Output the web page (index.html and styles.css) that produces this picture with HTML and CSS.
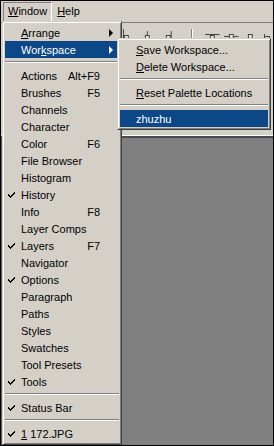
FILE: index.html
```html
<!DOCTYPE html>
<html lang="en">
<head>
    <meta charset="UTF-8">
    <meta name="viewport" content="width=device-width, initial-scale=1.0">
    <title>Window menu</title>
    <link rel="stylesheet" href="styles.css">
</head>
<body>
    <div class="app">
        <div class="menubar">
            <div class="bar-item pressed"><u>W</u>indow</div>
            <div class="bar-item"><u>H</u>elp</div>
        </div>

        <div class="optionsbar">
            <svg class="tool" width="16" height="12" viewBox="0 0 16 12">
                <line x1="1.5" y1="0" x2="1.5" y2="11" stroke="#404040"/>
                <rect x="2.5" y="6.5" width="4" height="4" fill="#e8e6e2" stroke="#404040"/>
            </svg>
            <svg class="tool" width="16" height="12" viewBox="0 0 16 12">
                <line x1="5.5" y1="2" x2="5.5" y2="7" stroke="#404040"/>
                <rect x="3.5" y="6.5" width="4" height="4" fill="#e8e6e2" stroke="#404040"/>
            </svg>
            <svg class="tool" width="16" height="12" viewBox="0 0 16 12">
                <rect x="5.5" y="6.5" width="4" height="4" fill="#e8e6e2" stroke="#404040"/>
                <line x1="10.5" y1="2" x2="10.5" y2="11" stroke="#404040"/>
            </svg>
            <span class="tool-sep"></span>
            <svg class="tool" width="16" height="12" viewBox="0 0 16 12">
                <line x1="0" y1="5.5" x2="15" y2="5.5" stroke="#404040"/>
                <rect x="5.5" y="6.5" width="4" height="4" fill="#e8e6e2" stroke="#404040"/>
            </svg>
            <svg class="tool" width="16" height="12" viewBox="0 0 16 12">
                <line x1="0" y1="7.5" x2="15" y2="7.5" stroke="#404040"/>
                <rect x="5.5" y="5.5" width="4" height="4" fill="#e8e6e2" stroke="#404040"/>
            </svg>
            <svg class="tool" width="16" height="12" viewBox="0 0 16 12">
                <rect x="4.5" y="5.5" width="4" height="4" fill="#e8e6e2" stroke="#404040"/>
                <line x1="0" y1="10.5" x2="13" y2="10.5" stroke="#404040"/>
            </svg>
            <svg class="tool" width="10" height="12" viewBox="0 0 10 12">
                <line x1="1.5" y1="5" x2="1.5" y2="11" stroke="#404040"/>
                <line x1="6.5" y1="7" x2="6.5" y2="11" stroke="#404040"/>
                <line x1="1.5" y1="7.5" x2="6.5" y2="7.5" stroke="#404040"/>
            </svg>
        </div>

        <div class="canvas"></div>

        <div class="menu main-menu">
            <div class="row"><span class="check"></span><span class="label"><u>A</u>rrange</span><span class="key"></span><span class="sub"><i class="arrow"></i></span></div>
            <div class="row active"><span class="check"></span><span class="label">Wor<u>k</u>space</span><span class="key"></span><span class="sub"><i class="arrow"></i></span></div>
            <div class="sep"></div>
            <div class="row"><span class="check"></span><span class="label">Actions</span><span class="key">Alt+F9</span><span class="sub"></span></div>
            <div class="row"><span class="check"></span><span class="label">Brushes</span><span class="key">F5</span><span class="sub"></span></div>
            <div class="row"><span class="check"></span><span class="label">Channels</span><span class="key"></span><span class="sub"></span></div>
            <div class="row"><span class="check"></span><span class="label">Character</span><span class="key"></span><span class="sub"></span></div>
            <div class="row"><span class="check"></span><span class="label">Color</span><span class="key">F6</span><span class="sub"></span></div>
            <div class="row"><span class="check"></span><span class="label">File Browser</span><span class="key"></span><span class="sub"></span></div>
            <div class="row"><span class="check"></span><span class="label">Histogram</span><span class="key"></span><span class="sub"></span></div>
            <div class="row checked"><span class="check"></span><span class="label">History</span><span class="key"></span><span class="sub"></span></div>
            <div class="row"><span class="check"></span><span class="label">Info</span><span class="key">F8</span><span class="sub"></span></div>
            <div class="row"><span class="check"></span><span class="label">Layer Comps</span><span class="key"></span><span class="sub"></span></div>
            <div class="row checked"><span class="check"></span><span class="label">Layers</span><span class="key">F7</span><span class="sub"></span></div>
            <div class="row"><span class="check"></span><span class="label">Navigator</span><span class="key"></span><span class="sub"></span></div>
            <div class="row checked"><span class="check"></span><span class="label">Options</span><span class="key"></span><span class="sub"></span></div>
            <div class="row"><span class="check"></span><span class="label">Paragraph</span><span class="key"></span><span class="sub"></span></div>
            <div class="row"><span class="check"></span><span class="label">Paths</span><span class="key"></span><span class="sub"></span></div>
            <div class="row"><span class="check"></span><span class="label">Styles</span><span class="key"></span><span class="sub"></span></div>
            <div class="row"><span class="check"></span><span class="label">Swatches</span><span class="key"></span><span class="sub"></span></div>
            <div class="row"><span class="check"></span><span class="label">Tool Presets</span><span class="key"></span><span class="sub"></span></div>
            <div class="row checked"><span class="check"></span><span class="label">Tools</span><span class="key"></span><span class="sub"></span></div>
            <div class="sep"></div>
            <div class="row checked"><span class="check"></span><span class="label">Status Bar</span><span class="key"></span><span class="sub"></span></div>
            <div class="sep"></div>
            <div class="row checked"><span class="check"></span><span class="label"><u>1</u> 172.JPG</span><span class="key"></span><span class="sub"></span></div>
        </div>

        <div class="menu sub-menu">
            <div class="row"><span class="check"></span><span class="label"><u>S</u>ave Workspace...</span></div>
            <div class="row"><span class="check"></span><span class="label"><u>D</u>elete Workspace...</span></div>
            <div class="sep"></div>
            <div class="row"><span class="check"></span><span class="label"><u>R</u>eset Palette Locations</span></div>
            <div class="sep"></div>
            <div class="row active"><span class="check"></span><span class="label">zhuzhu</span></div>
        </div>
    </div>
</body>
</html>
```

FILE: styles.css
```css
:root {
    --face: #d4d0c8;
    --shadow: #808080;
    --dark: #404040;
    --light: #ffffff;
    --select: #0c4787;
}

body {
    margin: 0;
    background: #000;
    font-family: 'Liberation Sans', Arial, sans-serif;
    font-size: 11px;
    color: #000;
}

.app {
    position: relative;
    box-sizing: border-box;
    width: 274px;
    height: 446px;
    border: 1px solid #000;
    background: var(--face);
    display: flex;
    flex-direction: column;
    overflow: hidden;
}

u {
    text-decoration: underline;
    text-underline-offset: 1px;
}

/* menu bar */
.menubar {
    height: 21px;
    display: flex;
    align-items: flex-end;
    padding-left: 2px;
}

.bar-item {
    height: 18px;
    line-height: 17px;
    padding: 0 4px;
    border: 1px solid transparent;
}

.bar-item.pressed {
    border-color: var(--shadow) var(--light) var(--light) var(--shadow);
}

/* options bar */
.optionsbar {
    height: 106px;
    border-top: 1px solid var(--shadow);
    border-bottom: 1px solid var(--light);
    display: flex;
    align-items: flex-start;
    gap: 4px;
    padding: 6px 0 0 121px;
}

.tool {
    display: block;
}

.optionsbar .tool:nth-child(2) { margin-left: 0; }
.optionsbar .tool:nth-child(3) { margin-left: 0; }

.tool-sep {
    width: 1px;
    height: 12px;
    margin: 0 8px 0 10px;
    background: var(--shadow);
    border-right: 1px solid var(--light);
}

/* canvas */
.canvas {
    flex: 1;
    background: #808080;
    border-top: 2px solid #4a4a4a;
    border-left: 3px solid #5e5e5e;
}

/* menus */
.menu {
    position: absolute;
    box-sizing: border-box;
    background: var(--face);
    border: 1px solid;
    border-color: var(--face) var(--dark) var(--dark) var(--face);
    box-shadow: inset 1px 1px var(--light), inset -1px -1px var(--shadow);
    padding: 2px;
}

.main-menu {
    left: 1px;
    top: 20px;
    width: 120px;
}

.sub-menu {
    left: 116px;
    top: 37px;
    width: 154px;
}

.row {
    height: 17px;
    display: grid;
    grid-template-columns: 16px 1fr auto 19px;
    align-items: center;
    white-space: nowrap;
}

.sub-menu .row {
    grid-template-columns: 16px 1fr;
}

.row.active {
    background: var(--select);
    color: #fff;
}

.check {
    height: 17px;
}

.row.checked .check {
    background: no-repeat 3px 6px / 7px 6px
        url("data:image/svg+xml,%3Csvg xmlns='http://www.w3.org/2000/svg' width='7' height='6'%3E%3Cpath d='M0 2h1v1h1v1h1V3h1V2h1V1h1V0h1v2H6v1H5v1H4v1H3v1H2V5H1V4H0z' fill='%23000'/%3E%3C/svg%3E");
}

.key {
    text-align: right;
}

.sub {
    display: flex;
    align-items: center;
    padding-left: 9px;
}

.arrow {
    width: 0;
    height: 0;
    border-top: 4px solid transparent;
    border-bottom: 4px solid transparent;
    border-left: 4px solid #000;
}

.row.active .arrow {
    border-left-color: #fff;
}

.sep {
    height: 0;
    margin: 3px 0 4px;
    border-top: 1px solid var(--shadow);
    border-bottom: 1px solid var(--light);
}
```
